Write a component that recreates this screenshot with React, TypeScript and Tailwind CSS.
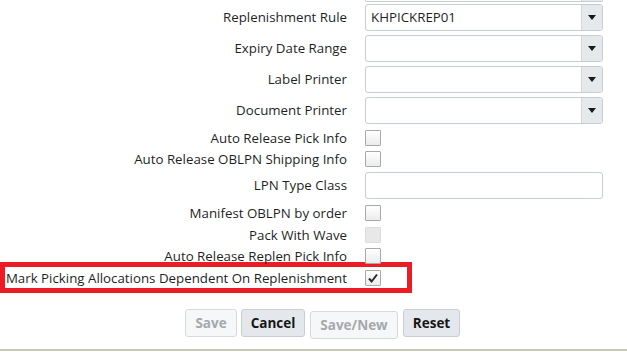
import React from "react";

const font = { fontFamily: '"Open Sans", "Noto Sans", Arial, sans-serif' };

function Caret() {
  return (
    <svg width="8" height="5" viewBox="0 0 8 5">
      <path d="M0 0 L8 0 L4 5 Z" fill="#1a1a1a" />
    </svg>
  );
}

function Select({ value }: { value?: string }) {
  return (
    <div className="flex h-[27px] w-[238px] overflow-hidden rounded-[3px] border border-[#c5ccd3] bg-white">
      <div className="flex flex-1 items-center pl-[5px] text-[13.3px] text-[#1f1f1f]">{value}</div>
      <div className="flex w-[21px] items-center justify-center border-l border-[#d3d8dd] bg-[#e6e9ec]">
        <Caret />
      </div>
    </div>
  );
}

function Checkbox({ checked, disabled }: { checked?: boolean; disabled?: boolean }) {
  if (disabled) {
    return <div className="h-[16px] w-[16px] rounded-[1px] border border-[#dcdcdc] bg-[#e8e8e8]" />;
  }
  return (
    <div className="flex h-[16px] w-[16px] items-center justify-center rounded-[1px] border border-[#a9a9a9] bg-gradient-to-b from-white to-[#ececec]">
      {checked && (
        <svg width="12" height="12" viewBox="0 0 12 12">
          <path d="M2 6.5 L4.6 9.5 L10 2.5" fill="none" stroke="#2a2a2a" strokeWidth="2" strokeLinejoin="miter" />
        </svg>
      )}
    </div>
  );
}

function Row({ label, children, h, mt }: { label: string; children: React.ReactNode; h: string; mt: string }) {
  return (
    <div className={`flex items-center ${h} ${mt}`}>
      <div className="w-[347px] pt-[1px] text-right text-[13.3px] leading-none text-[#1f1f1f]">{label}</div>
      <div className="ml-[18px]">{children}</div>
    </div>
  );
}

function Btn({ label, disabled, extra }: { label: string; disabled?: boolean; extra?: string }) {
  return (
    <div
      className={`flex h-[28px] items-center justify-center rounded-[3px] border text-[13.5px] font-bold ${
        disabled
          ? "border-[#d6dadd] bg-[#f6f7f8] text-[#a3a9ae]"
          : "border-[#c8ced4] bg-[#e4e8ec] text-[#161616]"
      } ${extra ?? ""}`}
    >
      {label}
    </div>
  );
}

export default function App() {
  return (
    <div className="relative h-[352px] w-[627px] overflow-hidden bg-white" style={font}>
      <div className="ml-[365px] flex h-[2px] w-[238px] overflow-hidden rounded-b-[3px] border border-t-0 border-[#c5ccd3]">
        <div className="flex-1" />
        <div className="w-[21px] border-l border-[#d3d8dd] bg-[#e6e9ec]" />
      </div>
      <Row label="Replenishment Rule" h="h-[27px]" mt="mt-[2px]">
        <Select value="KHPICKREP01" />
      </Row>
      <Row label="Expiry Date Range" h="h-[27px]" mt="mt-[4px]">
        <Select />
      </Row>
      <Row label="Label Printer" h="h-[27px]" mt="mt-[4px]">
        <Select />
      </Row>
      <Row label="Document Printer" h="h-[27px]" mt="mt-[4px]">
        <Select />
      </Row>
      <Row label="Auto Release Pick Info" h="h-[16px]" mt="mt-[6px]">
        <Checkbox />
      </Row>
      <Row label="Auto Release OBLPN Shipping Info" h="h-[16px]" mt="mt-[5px]">
        <Checkbox />
      </Row>
      <Row label="LPN Type Class" h="h-[27px]" mt="mt-[5px]">
        <div className="h-[27px] w-[238px] rounded-[3px] border border-[#c5ccd3] bg-white" />
      </Row>
      <Row label="Manifest OBLPN by order" h="h-[16px]" mt="mt-[6px]">
        <Checkbox />
      </Row>
      <Row label="Pack With Wave" h="h-[16px]" mt="mt-[6px]">
        <Checkbox disabled />
      </Row>
      <Row label="Auto Release Replen Pick Info" h="h-[16px]" mt="mt-[5px]">
        <Checkbox />
      </Row>
      <div className="-mt-[2px] flex h-[31px] w-[412px] items-center border-[5px] border-[#ec1c24] pt-[1px]">
        <div className="w-[342px] pt-[1px] text-right text-[13.3px] leading-none text-[#1f1f1f]">
          Mark Picking Allocations Dependent On Replenishment
        </div>
        <div className="ml-[18px]">
          <Checkbox checked />
        </div>
      </div>
      <div className="mt-[16px] flex items-start">
        <div className="ml-[185px]">
          <Btn label="Save" disabled extra="w-[52px]" />
        </div>
        <div className="ml-[4px]">
          <Btn label="Cancel" extra="w-[64px]" />
        </div>
        <div className="ml-[5px] mt-[2px]">
          <Btn label="Save/New" disabled extra="w-[88px]" />
        </div>
        <div className="ml-[5px]">
          <Btn label="Reset" extra="w-[57px]" />
        </div>
      </div>
      <div className="mt-[10px] h-[2px] w-full bg-[#c9c9b8]" />
    </div>
  );
}
